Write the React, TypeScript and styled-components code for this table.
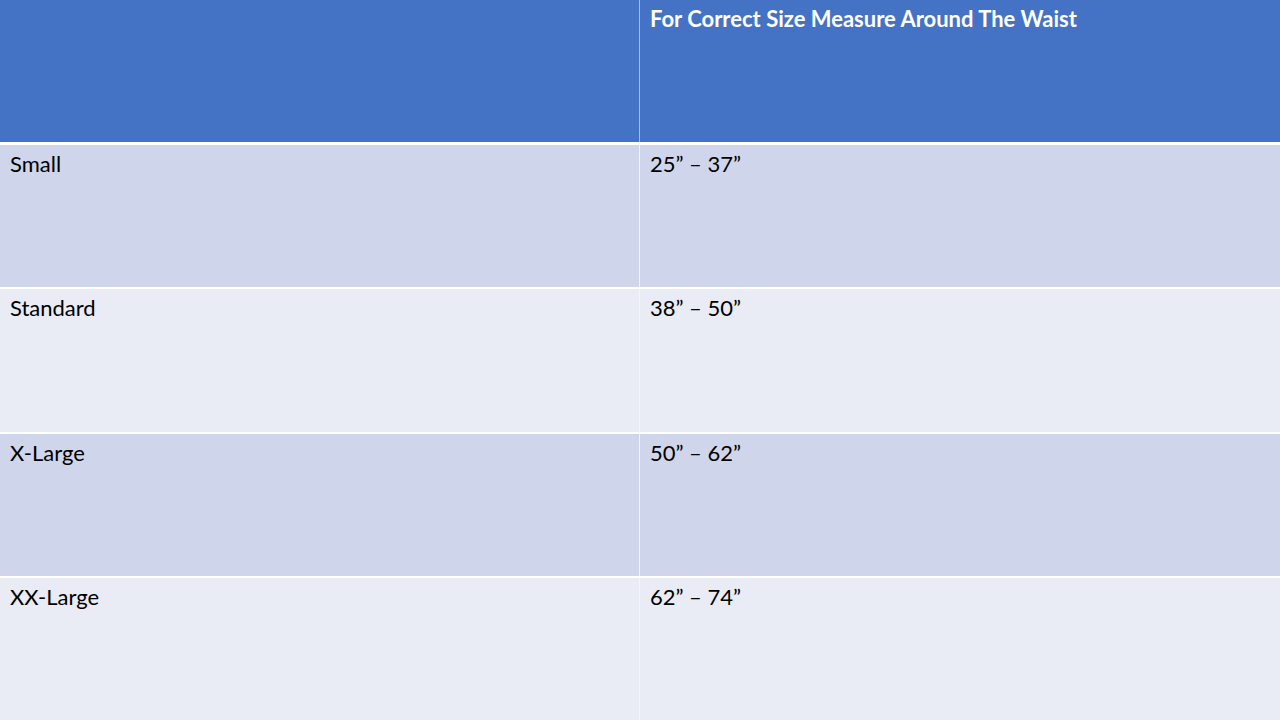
import React from 'react';
import styled, { createGlobalStyle } from 'styled-components';

const GlobalStyle = createGlobalStyle`
  html, body {
    margin: 0;
    padding: 0;
    background: #ffffff;
  }
`;

const Table = styled.div`
  width: 1280px;
  height: 720px;
  display: flex;
  flex-direction: column;
  gap: 2px;
  background: #ffffff;
  font-family: Lato, 'Open Sans', sans-serif;
`;

const HeaderRow = styled.div`
  display: grid;
  grid-template-columns: 639px 1fr;
  gap: 1px;
  height: 142px;
  background: #a9bbe6;
  margin-bottom: 1px;
`;

const Row = styled.div`
  display: grid;
  grid-template-columns: 639px 1fr;
  gap: 1px;
  flex: 1;
  background: #f4f5fa;
`;

const HeadCell = styled.div`
  background: #4472c4;
  color: #ffffff;
  font-weight: 700;
  font-size: 22px;
  line-height: 26px;
  padding: 6px 10px;
`;

const Cell = styled.div<{ $shade: 'dark' | 'light' }>`
  background: ${(p) => (p.$shade === 'dark' ? '#cfd5ea' : '#e9ebf5')};
  color: #000000;
  font-size: 22px;
  line-height: 26px;
  padding: 6px 10px;
`;

const sizes = [
  { name: 'Small', range: '25” – 37”' },
  { name: 'Standard', range: '38” – 50”' },
  { name: 'X-Large', range: '50” – 62”' },
  { name: 'XX-Large', range: '62” – 74”' },
];

export default function App() {
  return (
    <>
      <GlobalStyle />
      <Table>
        <HeaderRow>
          <HeadCell />
          <HeadCell>For Correct Size Measure Around The Waist</HeadCell>
        </HeaderRow>
        {sizes.map((s, i) => {
          const shade = i % 2 === 0 ? 'dark' : 'light';
          return (
            <Row key={s.name}>
              <Cell $shade={shade}>{s.name}</Cell>
              <Cell $shade={shade}>{s.range}</Cell>
            </Row>
          );
        })}
      </Table>
    </>
  );
}
